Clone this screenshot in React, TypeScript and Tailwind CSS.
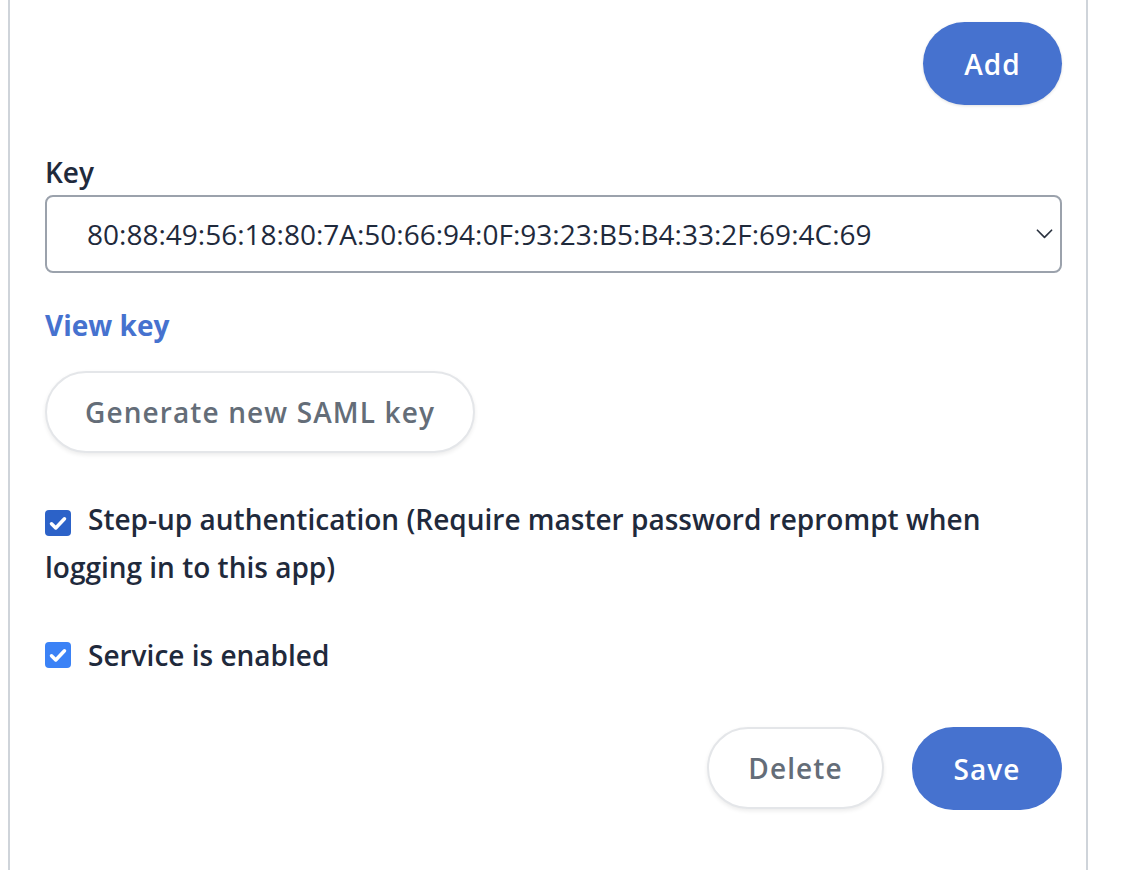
import React from "react";

function Check() {
  return (
    <svg viewBox="0 0 16 16" className="w-[20px] h-[20px]" fill="none">
      <path d="M2.8 8.6l3.4 3.4 7-7.4" stroke="white" strokeWidth="2.8" strokeLinecap="round" strokeLinejoin="round" />
    </svg>
  );
}

export default function App() {
  return (
    <div className="w-[1136px] h-[870px] bg-white overflow-hidden" style={{ fontFamily: '"Open Sans", sans-serif' }}>
      <div className="ml-[8px] w-[1080px] h-[870px] border-x-2 border-[#cfd4da] pl-[35px] pr-[24px] pt-[22px] text-[#1f2a3c] font-semibold">
        <div className="flex justify-end">
          <button className="w-[139px] h-[83px] rounded-full bg-[#4672cf] text-white text-[28px] tracking-[0.04em] font-semibold shadow-[0_1px_3px_rgba(0,0,0,0.12)]">
            Add
          </button>
        </div>
        <div className="mt-[48px] text-[28px] leading-[38px]">Key</div>
        <div className="mt-[4px] h-[78px] border-2 border-[#9ba2ac] rounded-[8px] flex items-center pl-[40px] pr-[7px]">
          <span className="flex-1 text-[28px] font-normal">80:88:49:56:18:80:7A:50:66:94:0F:93:23:B5:B4:33:2F:69:4C:69</span>
          <svg viewBox="0 0 20 12" className="w-[17px] h-[10px]" fill="none">
            <path d="M1.5 1.5l8.5 8.5 8.5-8.5" stroke="#2b3340" strokeWidth="2" strokeLinecap="round" strokeLinejoin="round" />
          </svg>
        </div>
        <div className="mt-[33px] text-[28px] leading-[38px] font-bold text-[#4672cf]">View key</div>
        <button className="mt-[27px] w-[430px] h-[82px] rounded-full bg-white border-2 border-[#e4e6e9] shadow-[0_2px_4px_rgba(0,0,0,0.08)] text-[28px] tracking-[0.04em] font-semibold text-[#646d78]">
          Generate new SAML key
        </button>
        <div className="mt-[42px] text-[28px] leading-[48px]">
          <span className="inline-flex align-[-3px] mr-[17px] w-[26px] h-[26px] rounded-[4px] bg-[#2c62c8] items-center justify-center">
            <Check />
          </span>
          Step-up authentication (Require master password reprompt when logging in to this app)
        </div>
        <div className="mt-[40px] text-[28px] leading-[48px] flex items-center">
          <span className="inline-flex mr-[17px] w-[26px] h-[26px] rounded-[4px] bg-[#3b82f6] items-center justify-center">
            <Check />
          </span>
          Service is enabled
        </div>
        <div className="mt-[48px] flex justify-end gap-[28px]">
          <button className="w-[177px] h-[82px] rounded-full bg-white border-2 border-[#e4e6e9] shadow-[0_2px_4px_rgba(0,0,0,0.08)] text-[28px] tracking-[0.04em] font-semibold text-[#646d78]">
            Delete
          </button>
          <button className="w-[150px] h-[83px] rounded-full bg-[#4672cf] text-white text-[28px] tracking-[0.04em] font-semibold">
            Save
          </button>
        </div>
      </div>
    </div>
  );
}
